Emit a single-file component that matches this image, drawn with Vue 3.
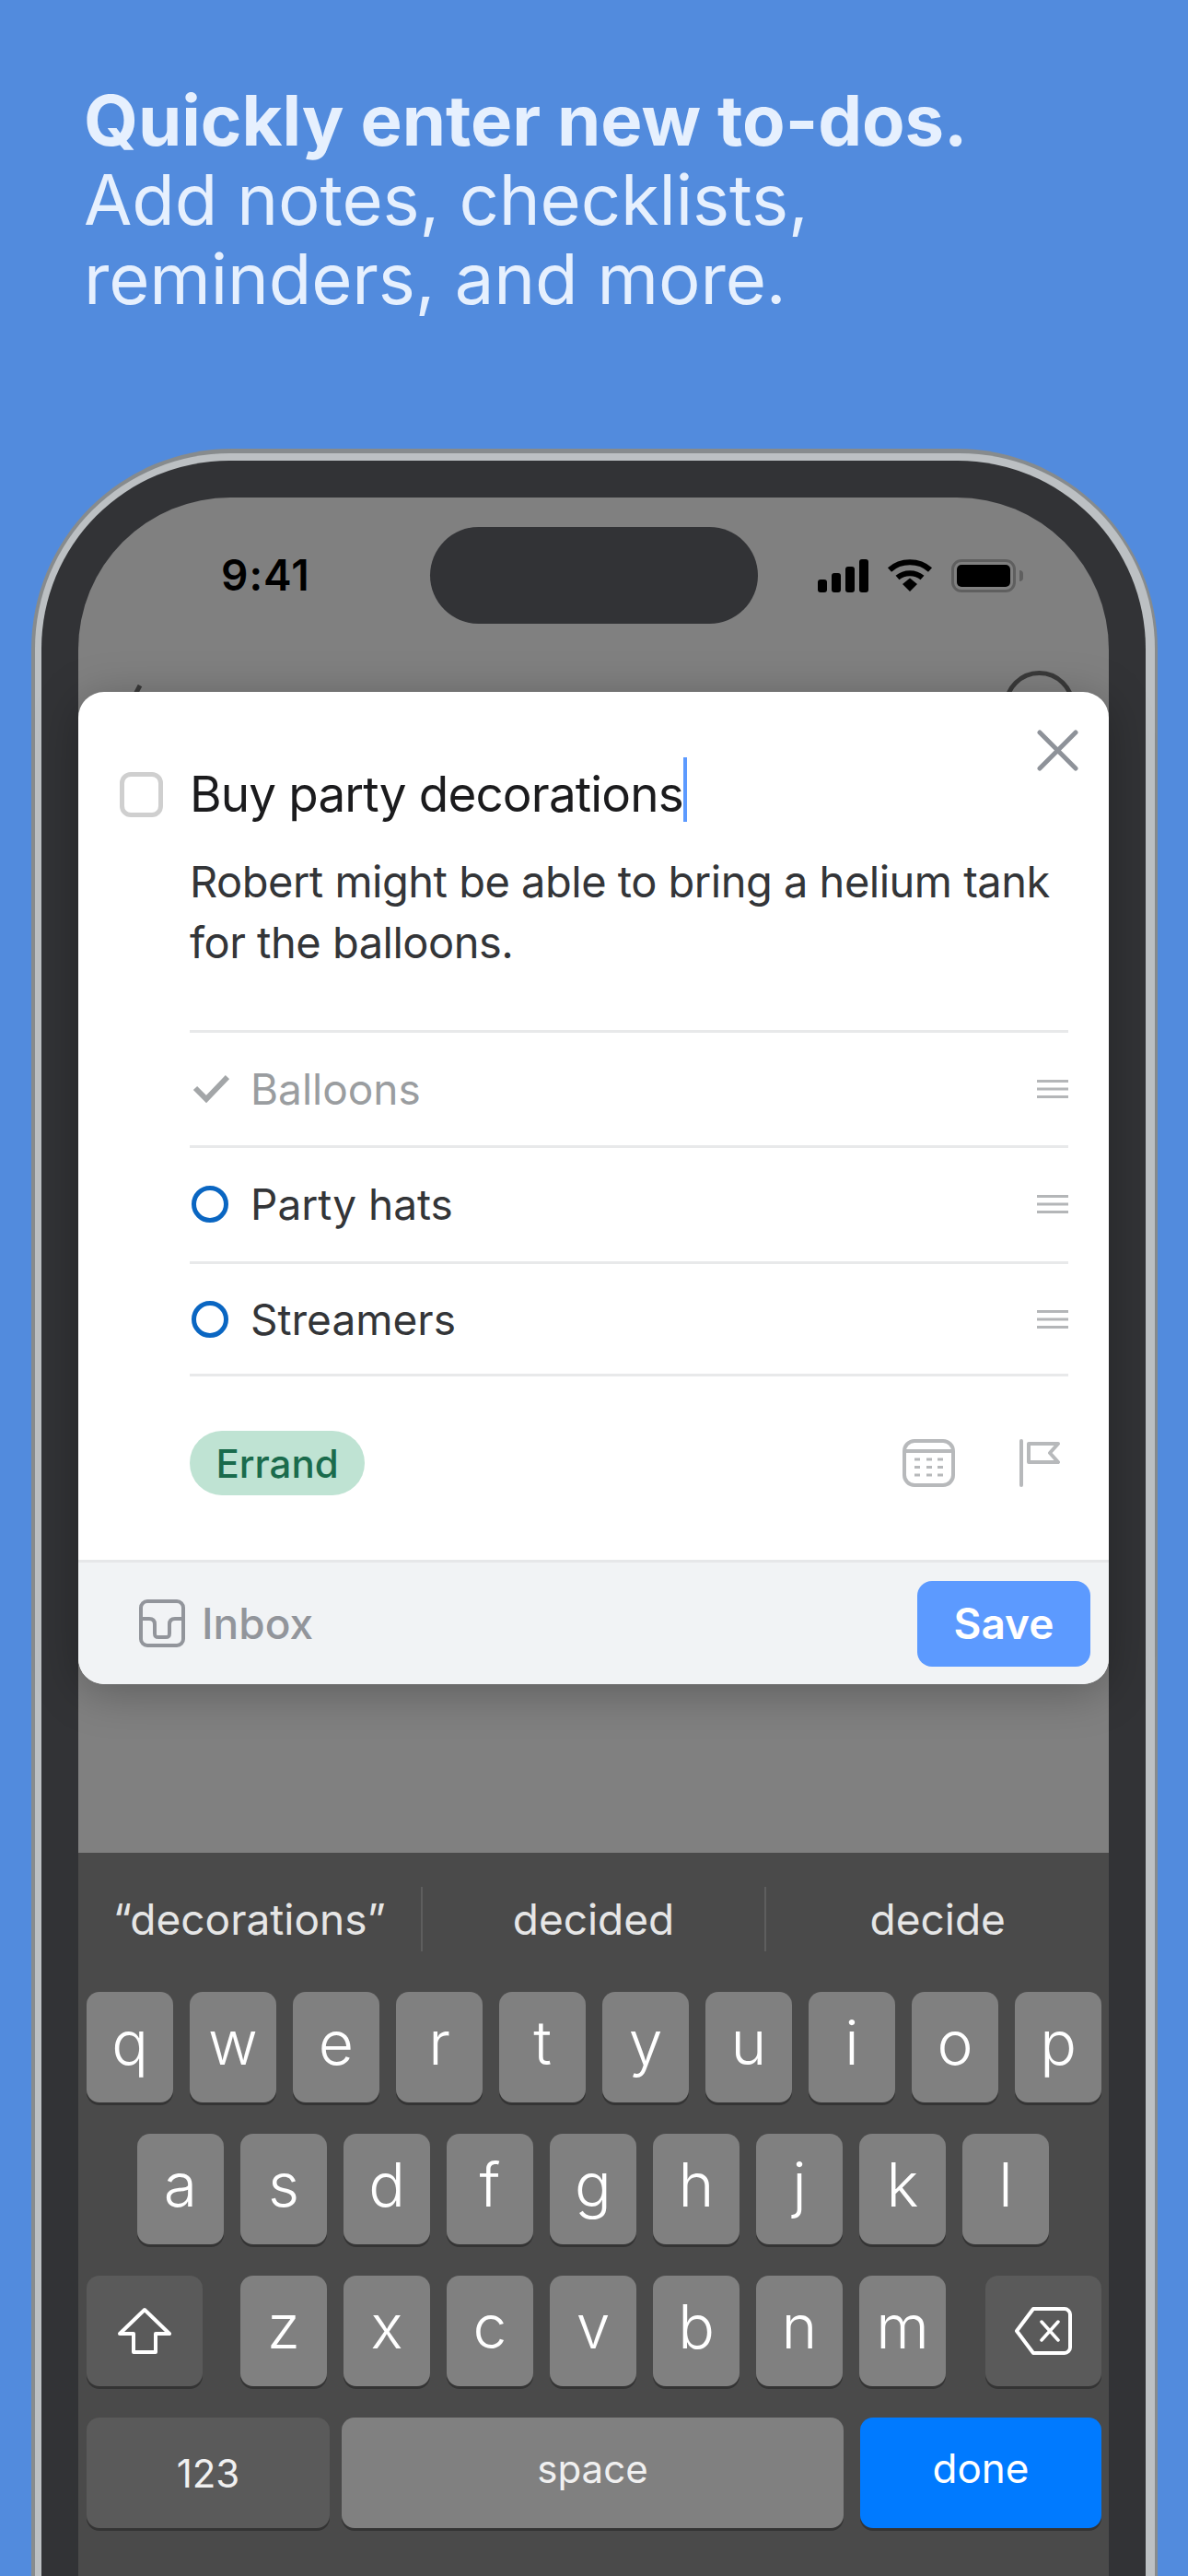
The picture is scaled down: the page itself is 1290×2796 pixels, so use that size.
<script setup>
const items = [
  { label: 'Balloons', done: true },
  { label: 'Party hats', done: false },
  { label: 'Streamers', done: false },
]
const suggestions = ['“decorations”', 'decided', 'decide']
const row1 = 'qwertyuiop'.split('')
const row2 = 'asdfghjkl'.split('')
const row3 = 'zxcvbnm'.split('')
</script>

<template>
  <div class="page">
    <h1 class="headline">
      <strong>Quickly enter new to-dos.</strong>
      <span>Add notes, checklists,</span>
      <span>reminders, and more.</span>
    </h1>

    <div class="phone">
      <div class="rim">
        <div class="bezel">
          <div class="screen">
            <div class="status">
              <span class="time">9:41</span>
              <div class="island"></div>
              <div class="status-icons">
                <svg class="signal" width="56" height="36" viewBox="0 0 56 36" fill="#000">
                  <rect x="0" y="22" width="10" height="14" rx="3" />
                  <rect x="15" y="15" width="10" height="21" rx="3" />
                  <rect x="30" y="8" width="10" height="28" rx="3" />
                  <rect x="45" y="0" width="10" height="36" rx="3" />
                </svg>
                <svg class="wifi" width="50" height="36" viewBox="0 0 50 36" fill="none" stroke="#000">
                  <path d="M3 11.5C15 0.5 35 0.5 47 11.5" stroke-width="6" />
                  <path d="M11.5 20C19 13.5 31 13.5 38.5 20" stroke-width="6" />
                  <path d="M17 27L25 20.5L33 27L25 35Z" fill="#000" stroke="none" />
                </svg>
                <div class="battery">
                  <div class="battery-fill"></div>
                </div>
                <div class="battery-nub"></div>
              </div>
            </div>

            <div class="peek">
              <svg class="peek-back" width="20" height="24" viewBox="0 0 20 24" fill="none" stroke="#3a3a3a" stroke-width="5">
                <path d="M16 1L6 20" />
              </svg>
              <div class="peek-circle"></div>
            </div>

            <div class="card">
              <div class="card-body">
                <svg class="close" width="45" height="45" viewBox="0 0 45 45" fill="none" stroke="#8e9299" stroke-width="5" stroke-linecap="round">
                  <path d="M3 3L42 42M42 3L3 42" />
                </svg>
                <div class="title-row">
                  <div class="checkbox"></div>
                  <div class="title">Buy party decorations<span class="caret"></span></div>
                </div>
                <p class="note">Robert might be able to bring a helium tank<br />for the balloons.</p>
                <ul class="checklist">
                  <li v-for="item in items" :key="item.label" class="item" :class="{ done: item.done }">
                    <svg v-if="item.done" class="item-mark" width="42" height="42" viewBox="0 0 42 42" fill="none" stroke="#a3a6a8" stroke-width="6">
                      <path d="M5 20L17 32L40 8" />
                    </svg>
                    <svg v-else class="item-mark" width="42" height="42" viewBox="0 0 42 42" fill="none" stroke="#0a66c2" stroke-width="5">
                      <circle cx="21" cy="21" r="17.5" />
                    </svg>
                    <span class="item-label">{{ item.label }}</span>
                    <svg class="grip" width="34" height="22" viewBox="0 0 34 22" fill="#b4b6b8">
                      <rect y="1" width="34" height="3" />
                      <rect y="9.5" width="34" height="3" />
                      <rect y="18" width="34" height="3" />
                    </svg>
                  </li>
                </ul>
                <div class="meta-row">
                  <span class="tag">Errand</span>
                  <div class="meta-icons">
                    <svg width="57" height="52" viewBox="0 0 57 52" fill="none" stroke="#b7b9bb" stroke-width="4">
                      <rect x="2" y="2" width="53" height="48" rx="11" />
                      <path d="M2 13H55" />
                      <path d="M13 22H19M26 22H32M38 22H44M13 30.500H19M26 30.500H32M38 30.500H44M13 39H19M26 39H32M38 39H44" stroke-width="3" />
                    </svg>
                    <svg width="44" height="52" viewBox="0 0 44 52" fill="none" stroke="#b7b9bb" stroke-width="4" stroke-linejoin="round" stroke-linecap="round">
                      <path d="M2 2V50" />
                      <path d="M10 5H42L33 15L42 25H10Z" />
                    </svg>
                  </div>
                </div>
              </div>
              <div class="card-footer">
                <div class="inbox">
                  <svg width="50" height="52" viewBox="0 0 50 52" fill="none" stroke="#92959b" stroke-width="4" stroke-linejoin="round">
                    <rect x="2" y="2" width="46" height="48" rx="7" />
                    <path d="M2 21H11C15 21 17 23 17 27V37C17 40 18 41 21 41H29C32 41 33 40 33 37V27C33 23 35 21 39 21H48" />
                  </svg>
                  <span>Inbox</span>
                </div>
                <div class="save">Save</div>
              </div>
            </div>

            <div class="spacer"></div>

            <div class="keyboard">
              <div class="suggestions">
                <span v-for="s in suggestions" :key="s" class="suggestion">{{ s }}</span>
              </div>
              <div class="row">
                <div v-for="k in row1" :key="k" class="key">{{ k }}</div>
              </div>
              <div class="row row-center">
                <div v-for="k in row2" :key="k" class="key">{{ k }}</div>
              </div>
              <div class="row row-third">
                <div class="key key-mod key-side">
                  <svg width="60" height="52" viewBox="0 0 60 52" fill="none" stroke="#fff" stroke-width="4" stroke-linejoin="round">
                    <path d="M30 3L57 29H42V49H18V29H3Z" />
                  </svg>
                </div>
                <div class="letters">
                  <div v-for="k in row3" :key="k" class="key">{{ k }}</div>
                </div>
                <div class="key key-mod key-side key-delete">
                  <svg width="62" height="52" viewBox="0 0 62 52" fill="none" stroke="#fff" stroke-width="4" stroke-linejoin="round" stroke-linecap="round">
                    <path d="M20 2H54C57 2 60 5 60 8V44C60 47 57 50 54 50H20L2 26Z" />
                    <path d="M29 16L47 36M47 16L29 36" stroke-width="3.500" />
                  </svg>
                </div>
              </div>
              <div class="row row-bottom">
                <div class="key key-mod key-num">123</div>
                <div class="key key-space">space</div>
                <div class="key key-done">done</div>
              </div>
            </div>
          </div>
        </div>
      </div>
    </div>
  </div>
</template>

<style>
html, body { margin: 0; padding: 0; }
</style>

<style scoped>
.page {
  width: 1290px;
  height: 2796px;
  overflow: hidden;
  background: #528bdd;
  font-family: Inter, "Liberation Sans", sans-serif;
  box-sizing: border-box;
  padding-top: 87px;
}
.headline {
  margin: 0 0 0 91px;
  height: 400px;
  display: flex;
  flex-direction: column;
  align-items: flex-start;
  font-size: 76px;
  line-height: 86px;
  font-weight: 400;
  letter-spacing: -0.15px;
  color: #e6f0fe;
}
.headline strong { font-weight: 700; letter-spacing: -0.05px; }
.phone {
  margin-left: 34px;
  width: 1223px;
  height: 2400px;
  box-sizing: border-box;
  padding: 5px 3px 0 4px;
  background: #878b8d;
  border-radius: 218px 218px 0 0;
}
.rim {
  height: 100%;
  box-sizing: border-box;
  padding: 8px 10px 0 7px;
  background: #bcc0c3;
  border-radius: 212px 212px 0 0;
}
.bezel {
  height: 100%;
  box-sizing: border-box;
  padding: 40px 40px 0 40px;
  background: #323336;
  border-radius: 204px 204px 0 0;
}
.screen {
  height: 100%;
  width: 1119px;
  background: #808080;
  border-radius: 165px 165px 0 0;
  display: flex;
  flex-direction: column;
}
.status {
  height: 188px;
  flex: none;
  display: flex;
  align-items: flex-start;
  position: relative;
}
.time {
  margin: 56px 0 0 155px;
  width: 100px;
  font-size: 46px;
  letter-spacing: 1px;
  line-height: 56px;
  font-weight: 600;
  color: #000;
}
.island {
  margin: 32px 0 0 127px;
  width: 356px;
  height: 105px;
  border-radius: 53px;
  background: #323336;
}
.status-icons {
  margin: 67px 0 0 65px;
  display: flex;
  align-items: flex-start;
}
.signal { margin-right: 19px; }
.wifi { margin-right: 20px; }
.battery {
  width: 70px;
  height: 36px;
  box-sizing: border-box;
  border: 3.500px solid #5f5f5f;
  border-radius: 11px;
  padding: 3px;
}
.battery-fill {
  height: 100%;
  background: #000;
  border-radius: 5px;
}
.battery-nub {
  margin: 12px 0 0 4px;
  width: 4px;
  height: 12px;
  background: #5f5f5f;
  border-radius: 0 4px 4px 0;
}
.peek {
  height: 23px;
  flex: none;
  position: relative;
  overflow: hidden;
}
.peek-back { position: absolute; left: 51px; top: 15px; }
.peek-circle {
  position: absolute;
  left: 1005px;
  top: 0;
  width: 77px;
  height: 77px;
  box-sizing: border-box;
  border: 5px solid #3a3a3a;
  border-radius: 50%;
}
.card {
  flex: none;
  height: 1077px;
  background: #fff;
  border-radius: 28px;
  box-shadow: 0 8px 50px rgba(0, 0, 0, 0.28);
  display: flex;
  flex-direction: column;
  overflow: hidden;
  position: relative;
}
.card-body {
  flex: 1;
  position: relative;
  padding: 86px 44px 0 46px;
}
.close { position: absolute; right: 33px; top: 41px; }
.title-row {
  display: flex;
  align-items: center;
  margin-left: -1px;
  height: 50px;
}
.checkbox {
  width: 47px;
  height: 49px;
  box-sizing: border-box;
  border: 5px solid #cfcfcf;
  border-radius: 12px;
  margin-right: 29px;
}
.title {
  position: relative;
  font-size: 53px;
  letter-spacing: -0.85px;
  line-height: 64px;
  color: #1b1b1d;
  white-space: nowrap;
}
.caret {
  position: absolute;
  right: -4px;
  top: -8px;
  width: 4px;
  height: 70px;
  background: #5c9aff;
}
.note {
  margin: 37px 0 0 75px;
  font-size: 47px;
  letter-spacing: -0.5px;
  line-height: 66px;
  color: #333538;
  white-space: nowrap;
}
.checklist {
  list-style: none;
  margin: 62px 0 0 75px;
  padding: 0;
  border-top: 3px solid #e8e9ea;
}
.item {
  height: 122px;
  border-bottom: 3px solid #e8e9ea;
  display: flex;
  align-items: center;
}
.item:nth-child(2) { height: 122px; padding-bottom: 1px; }
.item:last-child { height: 119px; }
.item-mark { margin-left: 1px; flex: none; }
.item-label {
  margin-left: 23px;
  flex: 1;
  font-size: 46px;
  color: #333538;
}
.done .item-label { color: #9a9da0; }
.grip { flex: none; }
.meta-row {
  margin: 59px 0 0 75px;
  display: flex;
  align-items: center;
  justify-content: space-between;
}
.tag {
  height: 70px;
  width: 190px;
  border-radius: 35px;
  background: #bfe3d3;
  color: #1a6b4c;
  font-size: 42px;
  font-weight: 500;
  display: flex;
  align-items: center;
  justify-content: center;
}
.meta-icons {
  display: flex;
  gap: 70px;
  align-items: center;
  padding-right: 9px;
}
.card-footer {
  flex: none;
  height: 132px;
  background: #f1f3f5;
  border-top: 3px solid #e6e7e9;
  display: flex;
  align-items: center;
  justify-content: space-between;
  padding: 0 20px 0 66px;
}
.inbox {
  display: flex;
  align-items: center;
  gap: 18px;
  font-size: 46px;
  font-weight: 500;
  color: #92959b;
}
.save {
  width: 188px;
  height: 93px;
  border-radius: 16px;
  background: #5c9aff;
  color: #fff;
  font-size: 46px;
  font-weight: 600;
  display: flex;
  align-items: center;
  justify-content: center;
}
.spacer { height: 183px; flex: none; }
.keyboard {
  flex: 1;
  background: #4a4a4a;
  box-sizing: border-box;
  padding: 0 8px 0 9px;
}
.suggestions {
  height: 151px;
  display: flex;
  align-items: flex-start;
  padding-top: 37px;
  box-sizing: border-box;
  margin: 0 -8px 0 -9px;
}
.suggestion {
  flex: 1 1 0;
  height: 70px;
  display: flex;
  align-items: center;
  justify-content: center;
  font-size: 46px;
  color: #e6e6e6;
  border-left: 2px solid #5e5e5e;
}
.suggestion:first-child { border-left: none; }
.row {
  display: flex;
  gap: 18px;
  margin-bottom: 34px;
}
.row-center { justify-content: center; padding-right: 2px; }
.row-third { gap: 41px; }
.key-delete { margin-left: auto; }
.row-bottom { gap: 0; }
.letters { display: flex; gap: 18px; }
.key {
  width: 94px;
  height: 120px;
  flex: none;
  border-radius: 14px;
  background: #808080;
  box-shadow: 0 3px 0 #343434;
  color: #fff;
  font-size: 66px;
  font-weight: 300;
  display: flex;
  align-items: center;
  justify-content: center;
  padding-bottom: 10px;
  box-sizing: border-box;
}
.key-mod { background: #5a5a5a; }
.key-side { width: 126px; padding-bottom: 0; }
.key-num { width: 264px; font-size: 42px; font-weight: 400; padding-bottom: 0; color: #f0f0f0; }
.key-space { width: 545px; margin-left: 13px; font-size: 42px; font-weight: 400; color: #f0f0f0; }
.key-done { width: 262px; margin-left: 18px; background: #007aff; font-size: 44px; font-weight: 400; }
</style>
